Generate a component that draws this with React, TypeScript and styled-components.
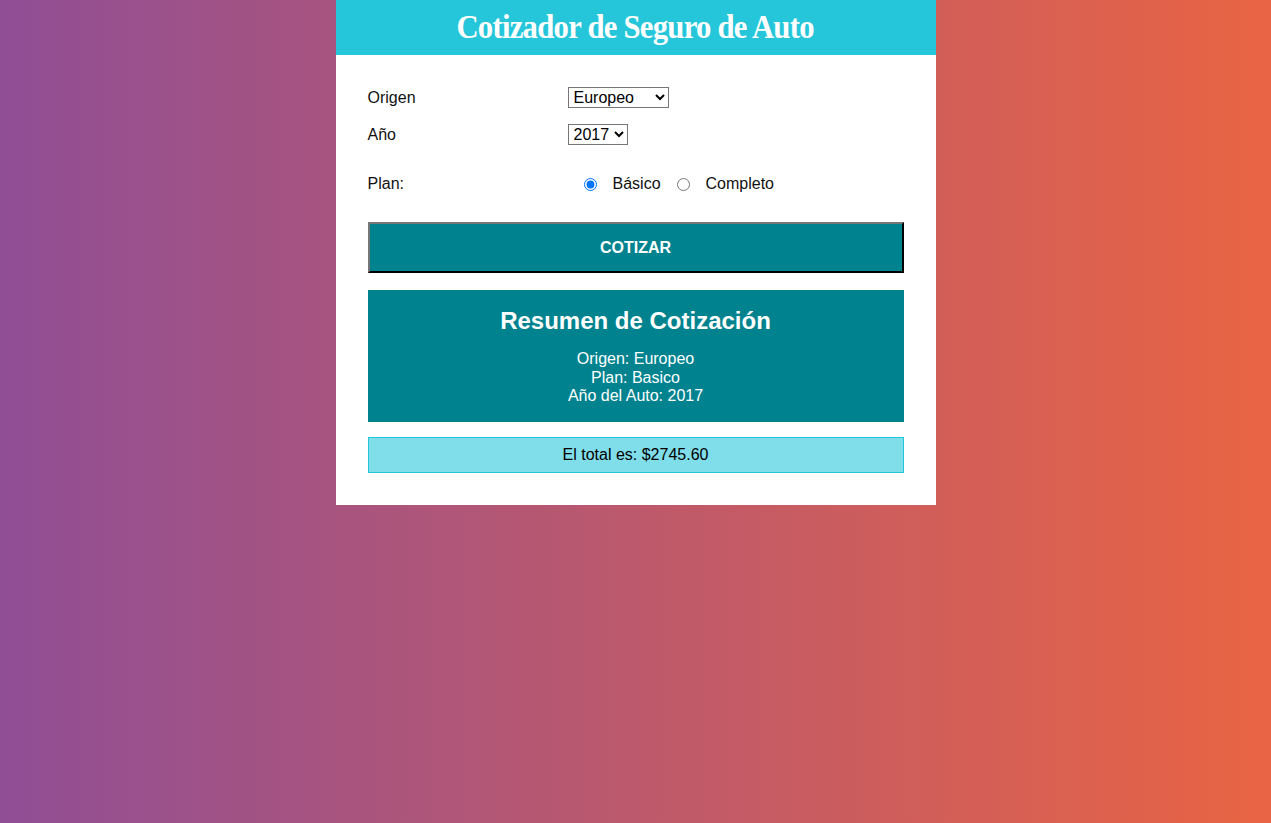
import React from "react";
import styled, { createGlobalStyle } from "styled-components";

const Global = createGlobalStyle`
  html, body { margin: 0; padding: 0; }
  body {
    min-height: 100vh;
    background: linear-gradient(to right, #904e95, #e96443);
    font-family: "Liberation Sans", Arial, sans-serif;
    font-size: 16px;
  }
`;

const Page = styled.div`
  min-height: 100vh;
  display: flex;
  justify-content: center;
  align-items: flex-start;
`;

const Container = styled.div`
  width: 600px;
  background: #fff;
`;

const Header = styled.header`
  background: #26c6da;
  height: 55px;
  display: flex;
  align-items: center;
  justify-content: center;
`;

const Title = styled.h1`
  margin: 0;
  color: #fff;
  font-family: "Liberation Serif", "DejaVu Serif", serif;
  font-weight: 700;
  font-size: 33px;
  letter-spacing: -0.8px;
  line-height: 1;
  transform: scaleX(0.93);
`;

const Form = styled.form`
  padding: 32px 32px 32px;
  display: flex;
  flex-direction: column;
`;

const Field = styled.div<{ $mt?: number }>`
  display: flex;
  align-items: center;
  margin-bottom: 16px;
  margin-top: ${(p) => p.$mt ?? 0}px;
  color: #111;
`;

const Label = styled.label`
  flex: 0 0 200px;
`;

const Select = styled.select<{ $w: number }>`
  font-family: "Liberation Sans", Arial, sans-serif;
  font-size: 16px;
  width: ${(p) => p.$w}px;
  height: 21px;
  padding: 0 0 0 1px;
  border: 1px solid #767676;
  border-radius: 0;
  background: #fff;
  color: #000;
`;

const Radios = styled.div`
  display: flex;
  align-items: center;
  padding-left: 16px;
`;

const Radio = styled.input`
  width: 13px;
  height: 13px;
  margin: 0 16px 0 0;
`;

const RadioText = styled.span`
  margin-right: 16px;
`;

const Button = styled.button`
  margin-top: 13px;
  height: 51px;
  background: #00838f;
  color: #fff;
  font-family: "Liberation Sans", Arial, sans-serif;
  font-size: 16px;
  font-weight: 700;
  text-transform: uppercase;
  border: 2px outset #767676;
  border-color: #767676 #222 #222 #767676;
`;

const Summary = styled.div`
  margin-top: 17px;
  background: #00838f;
  color: #fff;
  text-align: center;
  padding: 17px 0 16px;
`;

const SummaryTitle = styled.h2`
  margin: 0 0 15px;
  font-size: 24px;
  font-weight: 700;
  line-height: 28px;
`;

const SummaryList = styled.ul`
  list-style: none;
  margin: 0;
  padding: 0;
  line-height: 18.5px;
`;

const Total = styled.div`
  margin-top: 15px;
  background: #80deea;
  border: 1px solid #26c6da;
  text-align: center;
  padding: 8px 0;
  line-height: 18px;
  color: #000;
`;

export default function App() {
  return (
    <>
      <Global />
      <Page>
        <Container>
          <Header>
            <Title>Cotizador de Seguro de Auto</Title>
          </Header>
          <Form onSubmit={(e) => e.preventDefault()}>
            <Field>
              <Label>Origen</Label>
              <Select $w={101} defaultValue="europeo">
                <option value="americano">Americano</option>
                <option value="europeo">Europeo</option>
                <option value="asiatico">Asiatico</option>
              </Select>
            </Field>
            <Field>
              <Label>Año</Label>
              <Select $w={60} defaultValue="2017">
                {["2021", "2020", "2019", "2018", "2017", "2016"].map((y) => (
                  <option key={y} value={y}>{y}</option>
                ))}
              </Select>
            </Field>
            <Field $mt={14}>
              <Label>Plan:</Label>
              <Radios>
                <Radio type="radio" name="plan" value="basico" defaultChecked />
                <RadioText>Básico</RadioText>
                <Radio type="radio" name="plan" value="completo" />
                <span>Completo</span>
              </Radios>
            </Field>
            <Button type="submit">Cotizar</Button>
            <Summary>
              <SummaryTitle>Resumen de Cotización</SummaryTitle>
              <SummaryList>
                <li>Origen: Europeo</li>
                <li>Plan: Basico</li>
                <li>Año del Auto: 2017</li>
              </SummaryList>
            </Summary>
            <Total>El total es: $2745.60</Total>
          </Form>
        </Container>
      </Page>
    </>
  );
}
